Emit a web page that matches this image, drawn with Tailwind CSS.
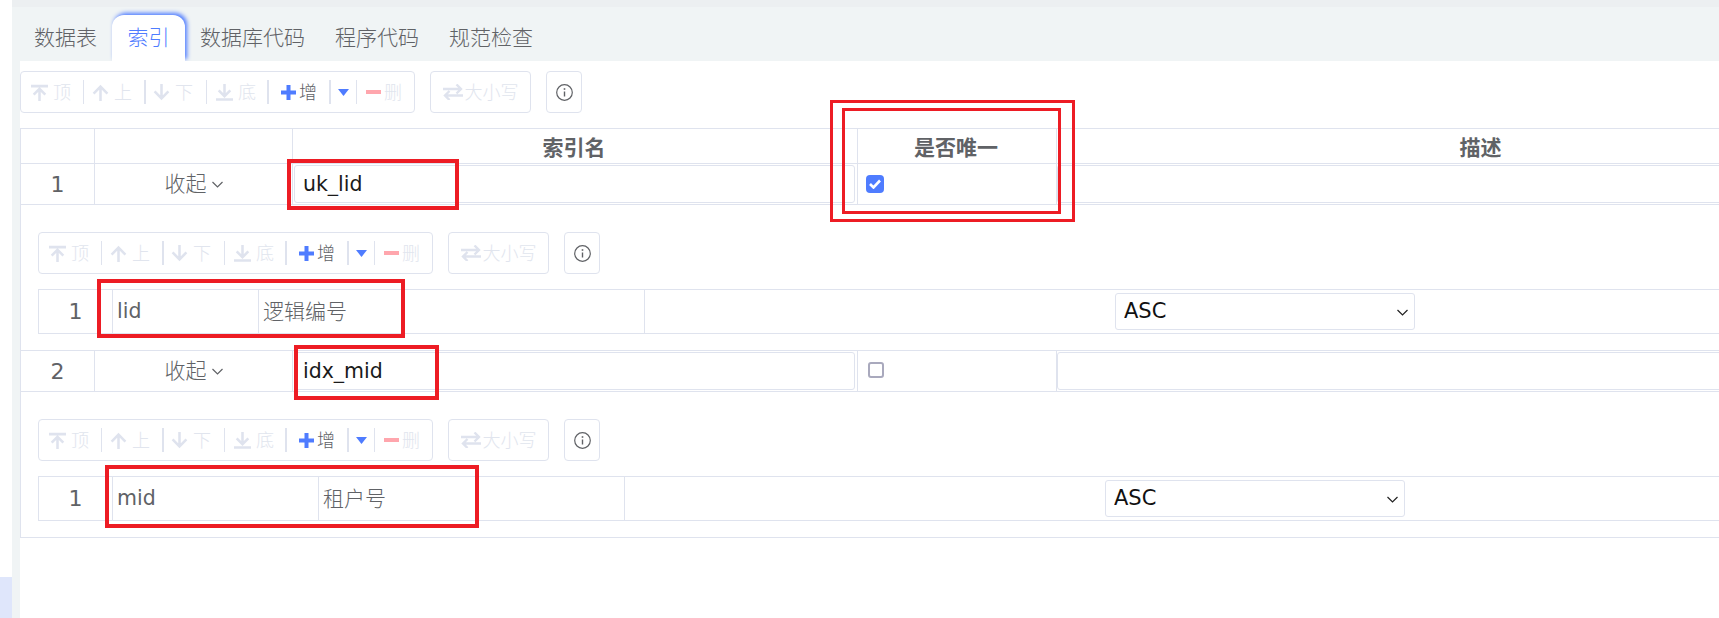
<!DOCTYPE html>
<html lang="zh">
<head>
  <meta charset="UTF-8" />
  <title>索引</title>
  <script src="https://cdn.jsdelivr.net/npm/@tailwindcss/browser@4"></script>
</head>
<body class="w-[1719px] h-[618px] overflow-hidden bg-white relative flex font-['Noto_Sans','Noto_Sans_CJK_SC',sans-serif] text-[#606266]">

  <!-- left rail -->
  <div class="w-3 shrink-0 flex flex-col justify-end">
    <div class="h-[41px] bg-[#dfe6fb]"></div>
  </div>

  <div class="flex-1 min-w-0 flex flex-col bg-[#f0f4f5]">
    <div class="h-[7px] bg-[#eceff1]"></div>

    <!-- tabs -->
    <div class="h-[54px] pl-[7px] flex items-end text-[21px] font-light overflow-hidden">
      <div class="h-[46px] px-[15px] flex items-center">数据表</div>
      <div class="h-[46px] px-[15.5px] flex items-center bg-white rounded-t-[12px] text-[#4f7cff] shadow-[2px_-2px_4px_#4f7cff]">索引</div>
      <div class="h-[46px] px-[15px] flex items-center">数据库代码</div>
      <div class="h-[46px] px-[15px] flex items-center">程序代码</div>
      <div class="h-[46px] px-[15px] flex items-center">规范检查</div>
    </div>

    <!-- content -->
    <div class="flex-1 ml-2 bg-white pt-2.5">
      <div data-toolbar></div>

      <div class="w-[1884px] mt-[15px] border-l border-t border-[#dfe3ee]">
        <!-- header -->
        <div class="h-[35px] grid grid-cols-[74px_198px_565px_199px_847px] border-b border-[#dfe3ee] font-bold text-[21px] text-center leading-[36px]">
          <div class="border-r border-[#dfe3ee]"></div>
          <div class="border-r border-[#dfe3ee]"></div>
          <div class="border-r border-[#dfe3ee] pr-[2px]">索引名</div>
          <div class="border-r border-[#dfe3ee] pr-[2px]">是否唯一</div>
          <div>描述</div>
        </div>

        <!-- index 1 -->
        <div class="h-[41px] grid grid-cols-[74px_198px_565px_199px_847px] border-b border-[#dfe3ee] text-[21px]">
          <div class="border-r border-[#dfe3ee] flex items-center justify-center font-['DejaVu_Sans',sans-serif] text-[22px]">1</div>
          <div class="border-r border-[#dfe3ee] flex items-center justify-center gap-[5px] font-light">收起
            <svg class="w-[11px] h-[7px]" viewBox="0 0 11 7" fill="none" stroke="#606266" stroke-width="1.2"><path d="M.5 1l5 5 5-5" /></svg>
          </div>
          <div class="border-r border-[#dfe3ee] flex items-center pr-0.5 pl-px">
            <input class="w-full h-[38px] px-[8px] border border-[#dfe3ee] rounded-[3px] font-['DejaVu_Sans',sans-serif] text-[20.500px] text-[#1a1a1a] outline-none" value="uk_lid" />
          </div>
          <div class="border-r border-[#dfe3ee] flex items-center pl-[8px]">
            <div class="w-[18px] h-[18px] rounded-[4px] bg-[#4f7cff] flex items-center justify-center">
              <svg class="w-3 h-[10px]" viewBox="0 0 12 10" fill="none" stroke="#fff" stroke-width="2.6"><path d="M1 5l3.500 3.500L11 1.500" /></svg>
            </div>
          </div>
          <div class="flex items-center">
            <input class="w-full h-[38px] border border-[#dfe3ee] rounded-[3px] outline-none" />
          </div>
        </div>

        <!-- index 1 columns -->
        <div class="h-[146px] pt-[27px] pl-[17px] border-b border-[#dfe3ee]">
          <div data-toolbar></div>
          <div class="w-[1848px] h-[45px] mt-[15px] grid grid-cols-[74px_146px_386px_1fr] border border-[#dfe3ee] text-[21px]">
            <div class="border-r border-[#dfe3ee] flex items-center justify-center font-['DejaVu_Sans',sans-serif] text-[22px]">1</div>
            <div class="border-r border-[#dfe3ee] flex items-center pl-[4px] font-['DejaVu_Sans',sans-serif] text-[20.500px]">lid</div>
            <div class="border-r border-[#dfe3ee] flex items-center pl-[4px] font-light">逻辑编号</div>
            <div class="flex items-center justify-center">
              <div class="relative">
                <select class="block appearance-none w-[300px] h-[37px] pl-[8px] border border-[#dfe3ee] rounded-[3px] bg-white text-[#111] font-['DejaVu_Sans',sans-serif] text-[21px] outline-none">
                  <option>ASC</option>
                </select>
                <svg class="absolute right-[7px] top-[16px] w-[11px] h-[7px]" viewBox="0 0 11 7" fill="none" stroke="#222" stroke-width="1.2"><path d="M.5 1l5 5 5-5" /></svg>
              </div>
            </div>
          </div>
        </div>

        <!-- index 2 -->
        <div class="h-[41px] grid grid-cols-[74px_198px_565px_199px_847px] border-b border-[#dfe3ee] text-[21px]">
          <div class="border-r border-[#dfe3ee] flex items-center justify-center font-['DejaVu_Sans',sans-serif] text-[22px]">2</div>
          <div class="border-r border-[#dfe3ee] flex items-center justify-center gap-[5px] font-light">收起
            <svg class="w-[11px] h-[7px]" viewBox="0 0 11 7" fill="none" stroke="#606266" stroke-width="1.2"><path d="M.5 1l5 5 5-5" /></svg>
          </div>
          <div class="border-r border-[#dfe3ee] flex items-center pr-0.5 pl-px">
            <input class="w-full h-[38px] px-[8px] border border-[#dfe3ee] rounded-[3px] font-['DejaVu_Sans',sans-serif] text-[20.500px] text-[#1a1a1a] outline-none" value="idx_mid" />
          </div>
          <div class="border-r border-[#dfe3ee] flex items-center pl-[10px] pb-[3px]">
            <div class="w-4 h-4 rounded-[3px] border-2 border-[#a9a9bd]"></div>
          </div>
          <div class="flex items-center">
            <input class="w-full h-[38px] border border-[#dfe3ee] rounded-[3px] outline-none" />
          </div>
        </div>

        <!-- index 2 columns -->
        <div class="h-[146px] pt-[27px] pl-[17px] border-b border-[#dfe3ee]">
          <div data-toolbar></div>
          <div class="w-[1848px] h-[45px] mt-[15px] grid grid-cols-[74px_206px_306px_1fr] border border-[#dfe3ee] text-[21px]">
            <div class="border-r border-[#dfe3ee] flex items-center justify-center font-['DejaVu_Sans',sans-serif] text-[22px]">1</div>
            <div class="border-r border-[#dfe3ee] flex items-center pl-[4px] font-['DejaVu_Sans',sans-serif] text-[20.500px]">mid</div>
            <div class="border-r border-[#dfe3ee] flex items-center pl-[4px] font-light">租户号</div>
            <div class="flex items-center justify-center">
              <div class="relative">
                <select class="block appearance-none w-[300px] h-[37px] pl-[8px] border border-[#dfe3ee] rounded-[3px] bg-white text-[#111] font-['DejaVu_Sans',sans-serif] text-[21px] outline-none">
                  <option>ASC</option>
                </select>
                <svg class="absolute right-[7px] top-[16px] w-[11px] h-[7px]" viewBox="0 0 11 7" fill="none" stroke="#222" stroke-width="1.2"><path d="M.5 1l5 5 5-5" /></svg>
              </div>
            </div>
          </div>
        </div>
      </div>
    </div>
  </div>

  <!-- red annotation boxes drawn over the screenshot -->
  <div class="absolute left-[287px] top-[159px] w-[172px] h-[51px] border-4 border-[#ed1c24]"></div>
  <div class="absolute left-[830px] top-[100px] w-[245px] h-[122px] border-[3.5px] border-[#ed1c24]"></div>
  <div class="absolute left-[842px] top-[108px] w-[219px] h-[106px] border-[3.5px] border-[#ed1c24]"></div>
  <div class="absolute left-[97px] top-[279px] w-[308px] h-[59px] border-4 border-[#ed1c24]"></div>
  <div class="absolute left-[294px] top-[345px] w-[145px] h-[55px] border-4 border-[#ed1c24]"></div>
  <div class="absolute left-[105px] top-[465px] w-[374px] h-[63px] border-4 border-[#ed1c24]"></div>

  <template id="toolbarTpl">
    <div class="flex items-stretch gap-[15px] h-[42px] text-[18px] font-light text-[#e1e5ee]">
      <div class="w-[395px] flex items-center border border-[#dfe3ee] rounded-[4px]">
        <div class="w-[63px] h-[24px] shrink-0 flex items-center gap-[5px] pl-[10px] border-r border-[#dfe3ee]">
          <svg class="w-[17px] h-[17px] shrink-0" viewBox="0 0 16 16" fill="none" stroke="#dfe3ee" stroke-width="2.4"><path d="M0 2h16M8 16V5M2.500 10L8 4.500 13.500 10" /></svg>顶
        </div>
        <div class="w-[62px] h-[24px] shrink-0 flex items-center gap-[5px] pl-[8px] border-r-2 border-[#dfe3ee]">
          <svg class="w-[17px] h-[17px] shrink-0" viewBox="0 0 16 16" fill="none" stroke="#dfe3ee" stroke-width="2.4"><path d="M8 16V3M1.500 9L8 2.500 14.500 9" /></svg>上
        </div>
        <div class="w-[61px] h-[24px] shrink-0 flex items-center gap-[5px] pl-[7px] border-r border-[#dfe3ee]">
          <svg class="w-[17px] h-[17px] shrink-0" viewBox="0 0 16 16" fill="none" stroke="#dfe3ee" stroke-width="2.4"><path d="M8 0v13M1.500 7L8 13.500 14.500 7" /></svg>下
        </div>
        <div class="w-[62px] h-[24px] shrink-0 flex items-center gap-[5px] pl-[9px] border-r-2 border-[#dfe3ee]">
          <svg class="w-[17px] h-[17px] shrink-0" viewBox="0 0 16 16" fill="none" stroke="#dfe3ee" stroke-width="2.4"><path d="M0 14.500h16M8 0v11M2.500 6L8 11.500 13.500 6" /></svg>底
        </div>
        <div class="w-[62px] h-[24px] shrink-0 flex items-center gap-[3px] pl-[12px] border-r-2 border-[#dfe3ee] text-[#606266]">
          <svg class="w-[15px] h-[15px] shrink-0" viewBox="0 0 15 15" fill="none" stroke="#4f7cff" stroke-width="4"><path d="M0 7.500h15M7.500 0v15" /></svg>增
        </div>
        <div class="w-[26px] h-[24px] shrink-0 flex items-center pl-[7px] border-r border-[#dfe3ee]">
          <svg class="w-[11px] h-[7px]" viewBox="0 0 11 7" fill="#4f7cff"><path d="M0 0h11L5.500 7z" /></svg>
        </div>
        <div class="flex items-center gap-[3px] pl-[9px]">
          <svg class="w-[15px] h-1" viewBox="0 0 15 4" fill="#ffa6ad"><rect width="15" height="4" /></svg>删
        </div>
      </div>
      <div class="w-[101px] flex items-center justify-center gap-[2px] border border-[#dfe3ee] rounded-[4px]">
        <svg class="w-5 h-4" viewBox="0 0 20 16" fill="none" stroke="#dfe3ee" stroke-width="2.4"><path d="M0 5h18M13.500 .5L18 5l-4.500 4.500M20 11.500H2M6.500 7L2 11.500 6.500 16" /></svg>大小写
      </div>
      <div class="w-9 flex items-center justify-center border border-[#dfe3ee] rounded-[4px]">
        <svg class="w-[17px] h-[17px]" viewBox="0 0 17 17" fill="none" stroke="#606266"><circle cx="8.500" cy="8.500" r="7.800" stroke-width="1.200" /><path d="M8.500 7.500v5" stroke-width="1.400" /><path d="M8.500 4.200v1.600" stroke-width="1.600" /></svg>
      </div>
    </div>
  </template>

  <script>
    const tpl = document.getElementById('toolbarTpl');
    document.querySelectorAll('[data-toolbar]').forEach((el) => {
      el.appendChild(tpl.content.cloneNode(true));
    });
  </script>
</body>
</html>
